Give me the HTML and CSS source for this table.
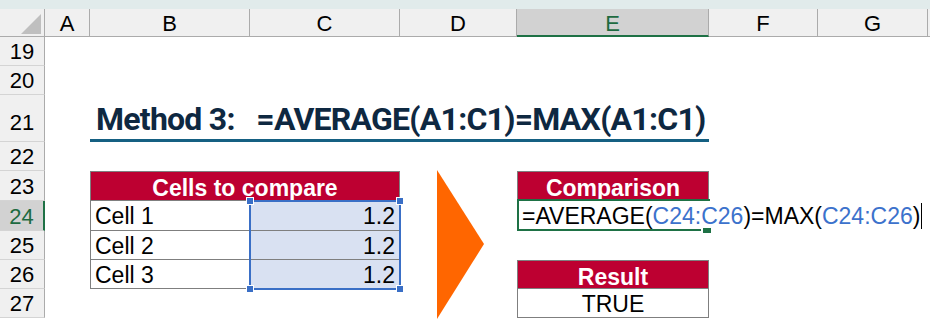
FILE: index.html
```html
<!DOCTYPE html>
<html lang="en">
<head>
<meta charset="utf-8">
<title>Method 3</title>
<link rel="stylesheet" href="styles.css">
</head>
<body>
<div class="topbar"></div>
<div class="sheet">
  <div class="corner"><svg width="44" height="27" viewBox="0 0 44 27"><polygon points="21,25 41,25 41,5" fill="#bfbfbf"/></svg></div>
  <div class="ch col-a">A</div>
  <div class="ch col-b">B</div>
  <div class="ch col-c">C</div>
  <div class="ch col-d">D</div>
  <div class="ch col-e sel">E</div>
  <div class="ch col-f">F</div>
  <div class="ch col-g">G</div>
  <div class="ch col-rest"></div>

  <div class="rh row19">19</div>
  <div class="rh row20">20</div>
  <div class="rh row21">21</div>
  <div class="rh row22">22</div>
  <div class="rh row23">23</div>
  <div class="rh row24 sel">24</div>
  <div class="rh row25">25</div>
  <div class="rh row26">26</div>
  <div class="rh row27">27</div>

  <div class="title">Method 3:&nbsp;&nbsp; =AVERAGE(A1:C1)=MAX(A1:C1)</div>

  <div class="hdr cmp-hdr">Cells to compare</div>
  <div class="cell label lab24">Cell 1</div>
  <div class="cell num num24">1.2</div>
  <div class="cell label lab25">Cell 2</div>
  <div class="cell num num25">1.2</div>
  <div class="cell label lab26">Cell 3</div>
  <div class="cell num num26">1.2</div>
  <div class="range">
    <span class="h tl"></span><span class="h tr"></span><span class="h bl"></span><span class="h br"></span>
  </div>

  <div class="arrow"><svg width="117" height="147" viewBox="0 0 117 147"><polygon points="37,-1 84,73 37,148" fill="#ff6600"/></svg></div>

  <div class="hdr comp-hdr">Comparison</div>
  <div class="formula">=AVERAGE(<span class="ref">C24:C26</span>)=MAX(<span class="ref">C24:C26</span>)<span class="caret"></span></div>

  <div class="hdr res-hdr">Result</div>
  <div class="cell result">TRUE</div>
</div>
</body>
</html>
```
FILE: styles.css
```css
* { box-sizing: border-box; }
html, body { margin: 0; padding: 0; }
body {
  background: #ffffff;
  font-family: "Liberation Sans", Arial, sans-serif;
  color: #000;
  overflow: hidden;
  width: 930px;
  height: 319px;
}
.topbar { height: 9px; background: #e1ebeb; }

.sheet {
  display: grid;
  grid-template-columns: 45px 45px 160px 150px 117px 192px 109px 110px 1fr;
  grid-template-rows: 28px 29px 29px 47px 29px 30px 30px 29px 29px 29px;
}

.corner {
  grid-area: 1 / 1 / 2 / 2;
  background: #f0f0f0;
  border-right: 1px solid #ababab;
  border-bottom: 1px solid #ababab;
}
.corner svg { display: block; }

.ch {
  grid-row: 1;
  background: #f0f0f0;
  border-right: 1px solid #ababab;
  border-bottom: 1px solid #ababab;
  font-size: 22px;
  line-height: 27px;
  padding-top: 1px;
  text-align: center;
}
.col-a { grid-column: 2; }
.col-b { grid-column: 3; }
.col-c { grid-column: 4; }
.col-d { grid-column: 5; }
.col-e { grid-column: 6; }
.col-f { grid-column: 7; }
.col-g { grid-column: 8; }
.col-rest { grid-column: 9; border-right: none; }
.ch.sel {
  background: #d2d2d2;
  color: #1e6b41;
  border-bottom: 2px solid #1e7145;
}

.rh {
  grid-column: 1;
  background: #f0f0f0;
  border-right: 1px solid #ababab;
  border-bottom: 1px solid #d4d4d4;
  font-size: 22px;
  line-height: 22px;
  display: flex;
  justify-content: center;
  align-items: flex-end;
  padding-bottom: 2px;
}
.row19 { grid-row: 2; }
.row20 { grid-row: 3; }
.row21 { grid-row: 4; padding-bottom: 7px; }
.row22 { grid-row: 5; }
.row23 { grid-row: 6; }
.row24 { grid-row: 7; }
.row25 { grid-row: 8; }
.row26 { grid-row: 9; }
.row27 { grid-row: 10; }
.rh.sel {
  background: #d2d2d2;
  color: #1e6b41;
  border-right: 2px solid #1e7145;
}

.title {
  grid-area: 4 / 3 / 5 / 7;
  border-bottom: 3px solid #156082;
  font-family: Roboto, "Liberation Sans", sans-serif;
  font-weight: 700;
  font-size: 32px;
  letter-spacing: -0.75px;
  color: #0e2841;
  padding-left: 6px;
  padding-top: 3px;
  line-height: 42px;
  white-space: nowrap;
}

.hdr {
  background: #bd0031;
  color: #fff;
  font-weight: 700;
  font-size: 23px;
  line-height: 28px;
  padding-top: 2px;
  text-align: center;
  border: 1px solid #7f7f7f;
}
.cmp-hdr { grid-area: 6 / 3 / 7 / 5; }
.comp-hdr { grid-area: 6 / 6 / 7 / 7; }
.res-hdr { grid-area: 9 / 6 / 10 / 7; }

.cell {
  font-size: 23px;
  line-height: 28px;
  padding-top: 1px;
  border-bottom: 1px solid #7f7f7f;
  border-right: 1px solid #7f7f7f;
  white-space: nowrap;
}
.label { grid-column: 3; border-left: 1px solid #7f7f7f; padding-left: 4px; }
.num { grid-column: 4; background: #d9e1f2; text-align: right; padding-right: 4px; }
.lab24, .num24 { grid-row: 7; line-height: 29px; }
.lab25, .num25 { grid-row: 8; }
.lab26, .num26 { grid-row: 9; }

.range {
  grid-area: 7 / 4 / 10 / 5;
  position: relative;
  z-index: 3;
}
.range::before {
  content: "";
  position: absolute;
  top: -1px; left: -1px; right: -1px; bottom: -1px;
  border: 2px solid #3a6fc6;
}
.h {
  position: absolute;
  width: 8px;
  height: 8px;
  background: #3a6fc6;
  border: 1px solid #fff;
}
.h.tl { left: -4px; top: -4px; }
.h.tr { right: -4px; top: -4px; }
.h.bl { left: -4px; bottom: -4px; }
.h.br { right: -4px; bottom: -4px; }

.arrow { grid-area: 6 / 5 / 11 / 6; }
.arrow svg { display: block; overflow: visible; }

.formula {
  grid-area: 7 / 6 / 8 / 7;
  position: relative;
  z-index: 2;
  font-size: 23px;
  line-height: 29px;
  padding-top: 1px;
  padding-left: 5px;
  white-space: nowrap;
  overflow: visible;
}
.formula::before {
  content: "";
  position: absolute;
  top: -2px; left: 0; right: -1px; bottom: 0;
  border: 2px solid #1e7145;
  border-right: none;
}
.formula::after {
  content: "";
  position: absolute;
  right: -2px;
  bottom: -2px;
  width: 8px;
  height: 5px;
  background: #1e7145;
  border-left: 2px solid #fff;
}
.ref { color: #3c72cc; }
.caret {
  display: inline-block;
  width: 1px;
  height: 26px;
  background: #000;
  vertical-align: -5px;
  margin-left: 1px;
}

.result {
  grid-area: 10 / 6 / 11 / 7;
  border-left: 1px solid #7f7f7f;
  text-align: center;
}
```
